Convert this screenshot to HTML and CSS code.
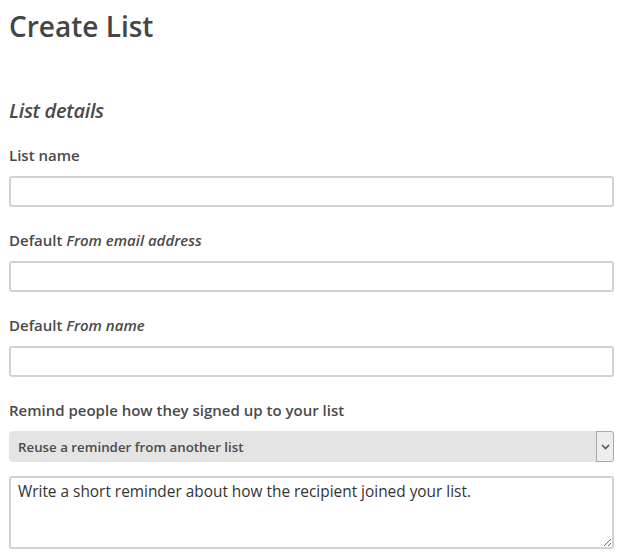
FILE: index.html
```html
<!DOCTYPE html>
<html lang="en">
<head>
<meta charset="utf-8">
<title>Create List</title>
<link rel="stylesheet" href="styles.css">
</head>
<body>
<main class="page">
  <h1 class="title">Create List</h1>
  <h2 class="section">List details</h2>
  <div class="field">
    <label class="label">List name</label>
    <input class="input" type="text">
  </div>
  <div class="field">
    <label class="label">Default <em>From email address</em></label>
    <input class="input" type="text">
  </div>
  <div class="field">
    <label class="label">Default <em>From name</em></label>
    <input class="input" type="text">
  </div>
  <div class="field">
    <label class="label">Remind people how they signed up to your list</label>
    <div class="select-wrap">
      <select class="select">
        <option>Reuse a reminder from another list</option>
      </select>
      <span class="select-arrow">
        <svg width="9" height="6" viewBox="0 0 9 6"><path d="M1 1 L4.5 4.5 L8 1" fill="none" stroke="#555" stroke-width="1.6"/></svg>
      </span>
    </div>
    <textarea class="textarea">Write a short reminder about how the recipient joined your list.</textarea>
  </div>
</main>
</body>
</html>
```
FILE: styles.css
```css
html, body {
  margin: 0;
  padding: 0;
  background: #fff;
}
.page {
  padding: 0 8px 0 9px;
  font-family: "Open Sans", "Liberation Sans", sans-serif;
  color: #4a4a4a;
}
.title {
  margin: 0;
  padding-top: 6px;
  font-size: 28px;
  font-weight: 600;
  line-height: 40px;
  color: #454545;
}
.section {
  margin: 50px 0 0;
  font-size: 20px;
  font-style: italic;
  font-weight: 600;
  line-height: 30px;
  letter-spacing: -0.3px;
}
.field {
  display: flex;
  flex-direction: column;
}
.label {
  display: block;
  margin-top: 18px;
  font-size: 15px;
  font-weight: 600;
  line-height: 22px;
  margin-bottom: 10px;
}
.field + .field .label {
  margin-top: 22px;
}
.label em {
  font-style: italic;
}
.input {
  box-sizing: border-box;
  width: 100%;
  height: 31px;
  margin: 0;
  border: 2px solid #d2d2d2;
  border-radius: 3px;
  background: #fff;
  font: inherit;
  outline: none;
}
.select-wrap {
  position: relative;
  height: 31px;
}
.select {
  appearance: none;
  -webkit-appearance: none;
  box-sizing: border-box;
  width: 100%;
  height: 31px;
  margin: 0;
  border: none;
  border-radius: 4px;
  background: #e4e4e4;
  padding: 0 0 0 9px;
  font-family: "Open Sans", "Liberation Sans", sans-serif;
  font-size: 13.3px;
  font-weight: 600;
  color: #4a4a4a;
}
.select-arrow {
  position: absolute;
  top: 0;
  right: 0;
  box-sizing: border-box;
  width: 18px;
  height: 31px;
  border: 1px solid #a9a9a9;
  border-radius: 0 3px 3px 0;
  background: #ededed;
  display: flex;
  align-items: center;
  justify-content: center;
}
.textarea {
  box-sizing: border-box;
  width: 100%;
  height: 73px;
  margin: 14px 0 0;
  padding: 4px 7px;
  border: 2px solid #d2d2d2;
  border-radius: 3px;
  font-family: "Open Sans", "Liberation Sans", sans-serif;
  font-size: 15.4px;
  line-height: 20px;
  color: #333;
  outline: none;
}
```
